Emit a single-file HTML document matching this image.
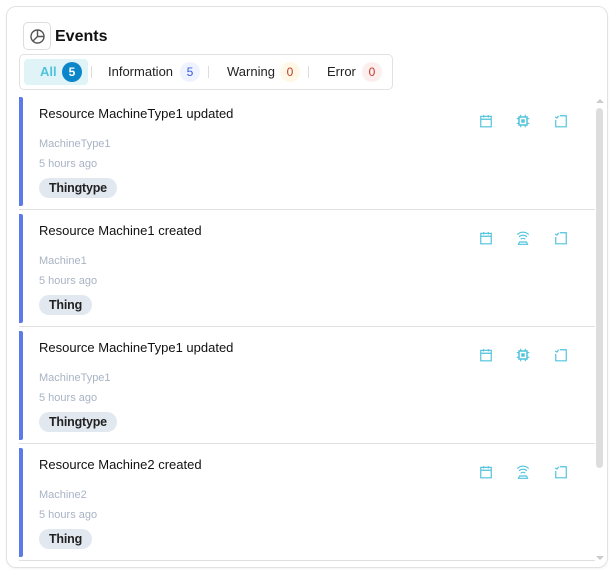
<!DOCTYPE html>
<html><head><style>
*{box-sizing:border-box;margin:0;padding:0}
body{width:614px;height:572px;background:#fff;font-family:"Liberation Sans",sans-serif;position:relative;overflow:hidden}
.card{position:absolute;left:6px;top:6px;width:602px;height:562px;border:1px solid #e2e2e2;border-radius:10px;box-shadow:0 1px 2px rgba(0,0,0,.05)}
.ib{position:absolute;left:23px;top:22px;width:28px;height:28px;border:1px solid #ddd;border-radius:5px}
.h{position:absolute;left:55px;top:28px;font-size:16px;font-weight:bold;color:#111}
.tabs{position:absolute;left:19px;top:54px;width:374px;height:36px;border:1px solid #e2e2e2;border-radius:5px}
.t{position:absolute;top:0;height:34px;line-height:34px;font-size:13px;color:#222}
.b{position:absolute;top:62px;height:20px;min-width:20px;border-radius:10px;text-align:center;line-height:20px;font-size:12px}
.sep{position:absolute;top:66px;width:1px;height:12px;background:#ddd}
.it{position:absolute;left:19px;width:576px;height:113px;border-bottom:1px solid #e0e0e0}
.bar{position:absolute;left:0;top:0;width:4px;height:109px;background:#5a7be8;border-radius:0 2px 2px 0}
.ti{position:absolute;left:20px;top:9px;font-size:13px;color:#111}
.s1{position:absolute;left:20px;top:41px;font-size:11px;color:#a8b3c4}
.s2{position:absolute;left:20px;top:61px;font-size:11px;color:#a8b3c4}
.p{position:absolute;left:20px;top:81px;height:20px;line-height:20px;padding:0 10px;background:#e2e8f0;border-radius:10px;font-size:12.5px;font-weight:bold;color:#222;letter-spacing:-0.2px}
.ic{position:absolute;top:17px}
</style></head><body>
<div class="card"></div>
<div class="ib"><svg width="28" height="28" viewBox="0 0 28 28"><circle cx="13.5" cy="13.5" r="6.5" fill="none" stroke="#555" stroke-width="1.4"/><path d="M13.5 7v6.5l-4.5 4.5M13.5 13.5H20" fill="none" stroke="#555" stroke-width="1.4"/></svg></div>
<div class="h">Events</div>
<div class="tabs"></div>
<div style="position:absolute;left:24px;top:59px;width:64px;height:26px;background:#e0f4f8;border-radius:4px"></div>
<div class="t" style="left:40px;top:55px;color:#4fc3dc;font-weight:bold">All</div>
<div class="b" style="left:62px;background:#0b86c8;color:#fff;font-weight:bold">5</div>
<div class="sep" style="left:91px"></div>
<div class="t" style="left:108px;top:55px">Information</div>
<div class="b" style="left:180px;background:#eef3ff;color:#3b5bdb">5</div>
<div class="sep" style="left:208px"></div>
<div class="t" style="left:227px;top:55px">Warning</div>
<div class="b" style="left:280px;background:#fff8e6;color:#c0392b">0</div>
<div class="sep" style="left:308px"></div>
<div class="t" style="left:327px;top:55px">Error</div>
<div class="b" style="left:362px;background:#fdeeee;color:#c0392b">0</div>

<div style="position:absolute;left:596px;top:108px;width:7px;height:360px;background:#ddd;border-radius:4px"></div>
<div style="position:absolute;left:596px;top:99px;width:0;height:0;border:4px solid transparent;border-bottom-color:#ccc;border-top:0"></div>
<div style="position:absolute;left:596px;top:556px;width:0;height:0;border:4px solid transparent;border-top-color:#ccc;border-bottom:0"></div>

<div id="items"></div>
<script>
var d=[["Resource MachineType1 updated","MachineType1","Thingtype",1],["Resource Machine1 created","Machine1","Thing",0],["Resource MachineType1 updated","MachineType1","Thingtype",1],["Resource Machine2 created","Machine2","Thing",0]];
var cal='<svg width="14" height="14" viewBox="0 0 12 12"><rect x="1.5" y="2" width="9" height="9" fill="none" stroke="#4fc3dc"/><path d="M1.5 4.5h9M4 1v2M8 1v2" stroke="#4fc3dc"/></svg>';
var chip='<svg width="16" height="16" viewBox="0 0 14 14"><rect x="3.5" y="3.5" width="7" height="7" fill="none" stroke="#4fc3dc" stroke-width="1.3"/><rect x="5.5" y="5.5" width="3" height="3" fill="#4fc3dc"/><path d="M5 1.5v2M9 1.5v2M5 10.5v2M9 10.5v2M1.5 5h2M1.5 9h2M10.5 5h2M10.5 9h2" stroke="#4fc3dc"/></svg>';
var wifi='<svg width="16" height="16" viewBox="0 0 14 14" fill="none" stroke="#4fc3dc"><path d="M2 4a7 7 0 0 1 10 0M3.5 6a5 5 0 0 1 7 0M5 8a3 3 0 0 1 4 0M3 12.5h8l-1-2H4z"/></svg>';
var doc='<svg width="14" height="14" viewBox="0 0 12 12" fill="none" stroke="#4fc3dc"><path d="M5 1.5h5.5v9.5h-9v-6M1 2.5l1.5 1 1.5-2"/></svg>';
var h='';d.forEach(function(x,i){var t=97+i*117;h+='<div class="it" style="top:'+t+'px"><div class="bar"></div><div class="ti">'+x[0]+'</div><div class="s1">'+x[1]+'</div><div class="s2">5 hours ago</div><div class="p">'+x[2]+'</div><div class="ic" style="left:460px">'+cal+'</div><div class="ic" style="left:496px;top:16px">'+(x[3]?chip:wifi)+'</div><div class="ic" style="left:535px">'+doc+'</div></div>';});
document.getElementById('items').innerHTML=h;
</script>
</body></html>
